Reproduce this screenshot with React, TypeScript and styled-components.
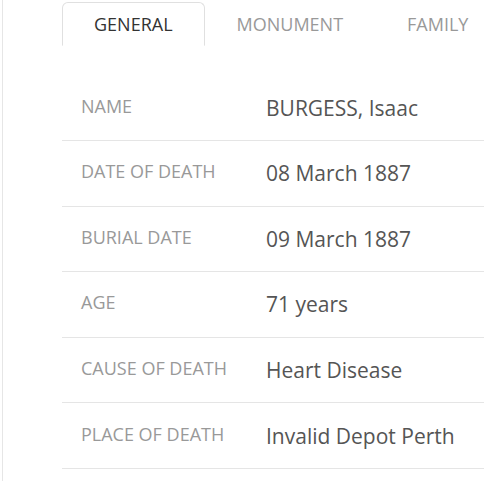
import React from "react";
import styled, { createGlobalStyle } from "styled-components";

const Global = createGlobalStyle`
  html, body { margin: 0; padding: 0; background: #fff; }
  body { font-family: "Open Sans", "Liberation Sans", sans-serif; }
`;

const Frame = styled.div`
  margin-left: 2px;
  border-left: 1px solid #e6e6e6;
  height: 481px;
  box-sizing: border-box;
  padding: 2px 0 0 59px;
  overflow: hidden;
`;

const TabBar = styled.div`
  display: flex;
  border-bottom: 1px solid #e0e0e0;
  height: 44px;
  box-sizing: border-box;
`;

const Tab = styled.div<{ $active?: boolean }>`
  display: flex;
  align-items: center;
  justify-content: center;
  padding: 0 31px;
  height: 44px;
  box-sizing: border-box;
  margin-bottom: -1px;
  font-size: 18px;
  color: ${(p) => (p.$active ? "#333" : "#999")};
  background: #fff;
  border: 1px solid ${(p) => (p.$active ? "#e0e0e0" : "transparent")};
  border-bottom-color: ${(p) => (p.$active ? "#fff" : "transparent")};
  border-radius: 6px 6px 0 0;
  white-space: nowrap;
`;

const Table = styled.div`
  padding-top: 29.4px;
`;

const Row = styled.div`
  display: grid;
  grid-template-columns: 204px 1fr;
  align-items: center;
  height: 65.6px;
  box-sizing: border-box;
  border-bottom: 1.5px solid #e5e5e5;
`;

const Label = styled.div`
  padding-left: 19px;
  font-size: 18px;
  color: #999;
  text-transform: uppercase;
  margin-top: -4px;
  white-space: nowrap;
`;

const Value = styled.div`
  font-size: 21px;
  color: #555;
  white-space: nowrap;
`;

const rows: [string, string][] = [
  ["Name", "BURGESS, Isaac"],
  ["Date of Death", "08 March 1887"],
  ["Burial Date", "09 March 1887"],
  ["Age", "71 years"],
  ["Cause of Death", "Heart Disease"],
  ["Place of Death", "Invalid Depot Perth"],
];

export default function App() {
  return (
    <>
      <Global />
      <Frame>
        <TabBar>
          <Tab $active>GENERAL</Tab>
          <Tab>MONUMENT</Tab>
          <Tab>FAMILY</Tab>
        </TabBar>
        <Table>
          {rows.map(([l, v]) => (
            <Row key={l}>
              <Label>{l}</Label>
              <Value>{v}</Value>
            </Row>
          ))}
        </Table>
      </Frame>
    </>
  );
}
